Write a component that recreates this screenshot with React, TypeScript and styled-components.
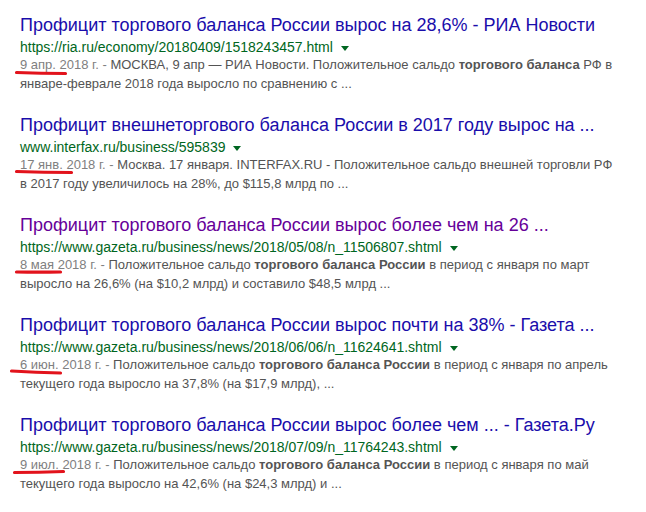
import React from "react";
import styled, { createGlobalStyle } from "styled-components";

type Part = string | { b: string };

type Result = {
  title: string;
  visited?: boolean;
  url: string;
  date: string;
  lines: Part[][];
  mark: { left: number; top: number; width: number; tilt: number };
};

const results: Result[] = [
  {
    title: "Профицит торгового баланса России вырос на 28,6% - РИА Новости",
    url: "https://ria.ru/economy/20180409/1518243457.html",
    date: "9 апр. 2018 г. - ",
    lines: [
      ["МОСКВА, 9 апр — РИА Новости. Положительное сальдо ", { b: "торгового баланса" }, " РФ в"],
      ["январе-феврале 2018 года выросло по сравнению с ..."],
    ],
    mark: { left: -5, top: 16, width: 52, tilt: 1 },
  },
  {
    title: "Профицит внешнеторгового баланса России в 2017 году вырос на ...",
    url: "www.interfax.ru/business/595839",
    date: "17 янв. 2018 г. - ",
    lines: [
      ["Москва. 17 января. INTERFAX.RU - Положительное сальдо внешней торговли РФ"],
      ["в 2017 году увеличилось на 28%, до $115,8 млрд по ..."],
    ],
    mark: { left: -5, top: 15, width: 58, tilt: 1 },
  },
  {
    title: "Профицит торгового баланса России вырос более чем на 26 ...",
    visited: true,
    url: "https://www.gazeta.ru/business/news/2018/05/08/n_11506807.shtml",
    date: "8 мая 2018 г. - ",
    lines: [
      ["Положительное сальдо ", { b: "торгового баланса России" }, " в период с января по март"],
      ["выросло на 26,6% (на $10,2 млрд) и составило $48,5 млрд ..."],
    ],
    mark: { left: -5, top: 15, width: 47, tilt: 0 },
  },
  {
    title: "Профицит торгового баланса России вырос почти на 38% - Газета ...",
    url: "https://www.gazeta.ru/business/news/2018/06/06/n_11624641.shtml",
    date: "6 июн. 2018 г. - ",
    lines: [
      ["Положительное сальдо ", { b: "торгового баланса России" }, " в период с января по апрель"],
      ["текущего года выросло на 37,8% (на $17,9 млрд), ..."],
    ],
    mark: { left: -10, top: 15, width: 52, tilt: 2 },
  },
  {
    title: "Профицит торгового баланса России вырос более чем ... - Газета.Ру",
    url: "https://www.gazeta.ru/business/news/2018/07/09/n_11764243.shtml",
    date: "9 июл. 2018 г. - ",
    lines: [
      ["Положительное сальдо ", { b: "торгового баланса России" }, " в период с января по май"],
      ["текущего года выросло на 42,6% (на $24,3 млрд) и ..."],
    ],
    mark: { left: -7, top: 15, width: 52, tilt: -1 },
  },
];

const GlobalStyle = createGlobalStyle`
  html, body {
    margin: 0;
    background: #fff;
  }
  body {
    font-family: Arial, "Liberation Sans", sans-serif;
  }
`;

const Page = styled.main`
  display: flex;
  flex-direction: column;
  gap: 21px;
  padding: 14px 0 0 20px;
`;

const Item = styled.div`
  display: flex;
  flex-direction: column;
`;

const Title = styled.a<{ $visited?: boolean }>`
  font-size: 18px;
  line-height: 22px;
  color: ${(p) => (p.$visited ? "#660099" : "#1a0dab")};
  text-decoration: none;
  white-space: nowrap;
`;

const UrlRow = styled.div`
  display: flex;
  align-items: center;
  margin-top: 2px;
  font-size: 14px;
  line-height: 18px;
  color: #006621;
  white-space: nowrap;
`;

const Caret = styled.span`
  margin-left: 8px;
  margin-top: 2px;
  border-top: 5px solid #006621;
  border-left: 4px solid transparent;
  border-right: 4px solid transparent;
`;

const Snippet = styled.div`
  position: relative;
  margin-top: -1px;
  font-size: 13px;
  line-height: 19px;
  color: #545454;
  white-space: nowrap;
`;

const DateText = styled.span`
  color: #808080;
`;

const Strong = styled.b`
  font-weight: bold;
  color: #545454;
`;

const Mark = styled.svg`
  position: absolute;
  overflow: visible;
`;

const RedMark = ({ left, top, width, tilt }: Result["mark"]) => (
  <Mark style={{ left, top, width, height: 4 }} viewBox={`0 0 ${width} 4`}>
    <path
      d={`M1.5 ${2 - tilt / 2} Q${width / 2} ${2.4} ${width - 1.5} ${2 + tilt / 2}`}
      stroke="#e2131c"
      strokeWidth="3.2"
      strokeLinecap="round"
      fill="none"
    />
  </Mark>
);

const App = () => {
  return (
    <>
      <GlobalStyle />
      <Page>
        {results.map((r) => (
          <Item key={r.url}>
            <Title href="#" $visited={r.visited}>
              {r.title}
            </Title>
            <UrlRow>
              {r.url}
              <Caret />
            </UrlRow>
            <Snippet>
              <RedMark {...r.mark} />
              {r.lines.map((line, i) => (
                <div key={i}>
                  {i === 0 && <DateText>{r.date}</DateText>}
                  {line.map((part, j) =>
                    typeof part === "string" ? part : <Strong key={j}>{part.b}</Strong>
                  )}
                </div>
              ))}
            </Snippet>
          </Item>
        ))}
      </Page>
    </>
  );
};

export default App;
